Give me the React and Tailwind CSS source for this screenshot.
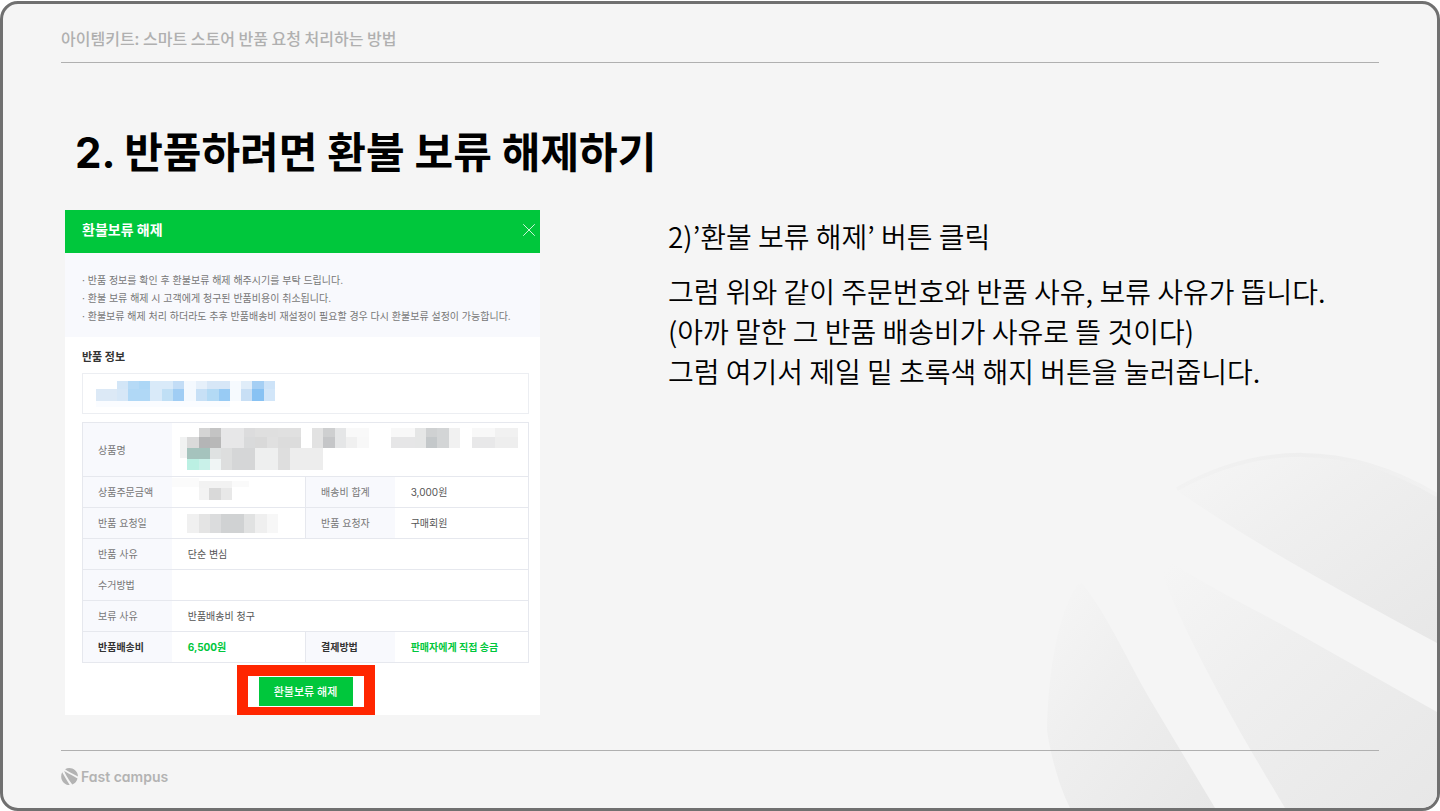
import React from 'react';
import { X } from 'lucide-react';

const notices = [
  '반품 정보를 확인 후 환불보류 해제 해주시기를 부탁 드립니다.',
  '환불 보류 해제 시 고객에게 청구된 반품비용이 취소됩니다.',
  '환불보류 해제 처리 하더라도 추후 반품배송비 재설정이 필요할 경우 다시 환불보류 설정이 가능합니다.',
];

// [x, y, width, height, color]
const orderBlocks = [
  [173, 123, 32, 25, '#d3e6f7'], [205, 123, 34, 25, '#b6daf6'], [239, 123, 34, 25, '#add7f6'],
  [273, 123, 68, 25, '#d9eaf9'], [341, 123, 34, 25, '#c3ddf6'], [375, 123, 34, 25, '#f4f9fe'],
  [409, 123, 35, 25, '#e6f0fa'], [444, 123, 67, 25, '#d7e7f7'], [511, 123, 34, 60, '#f6fafe'],
  [545, 123, 34, 25, '#e0edf9'], [579, 123, 34, 25, '#a5cff4'], [613, 123, 35, 25, '#cde3f8'],
  [110, 148, 63, 35, '#dce9f6'], [173, 148, 32, 35, '#d6e7f7'], [205, 148, 68, 35, '#b0d8f6'],
  [273, 148, 34, 35, '#d9eaf9'], [307, 148, 34, 35, '#c0dff5'], [341, 148, 34, 35, '#a0cdf4'],
  [375, 148, 34, 35, '#f4f9fe'], [409, 148, 35, 35, '#c7e0f6'], [444, 148, 34, 35, '#b3daf5'],
  [478, 148, 33, 35, '#98cbf4'], [545, 148, 34, 35, '#c8dff5'], [579, 148, 34, 35, '#88c2f3'],
  [613, 148, 35, 35, '#d2e6f9'], [110, 183, 401, 17, '#fafcff'],
];

const productBlocks = [
  [416, 262, 34, 26, '#d4d4d4'], [450, 262, 33, 26, '#c4c4c4'], [483, 262, 69, 58, '#e7e7e8'],
  [552, 262, 34, 26, '#dcdcdd'], [586, 262, 68, 26, '#dfdfdf'], [654, 262, 69, 26, '#e0e0e0'],
  [552, 288, 34, 32, '#d9dadb'], [586, 288, 34, 32, '#d9d9d9'], [620, 288, 34, 32, '#e0e0e0'],
  [654, 288, 69, 32, '#dcdcdc'], [360, 288, 22, 62, '#f1f2f2'], [382, 288, 34, 32, '#dadada'],
  [416, 288, 34, 32, '#b4b5b6'], [450, 288, 33, 32, '#b8b8b8'], [382, 320, 68, 34, '#a5c3bd'],
  [450, 320, 33, 34, '#dfe2e2'], [483, 320, 34, 67, '#dddede'], [517, 320, 68, 67, '#d5d6d7'],
  [382, 354, 34, 33, '#bbf0e3'], [416, 354, 34, 33, '#c9f1e9'], [450, 354, 33, 33, '#f0f5f5'],
  [585, 320, 69, 67, '#eeefef'], [654, 320, 36, 67, '#dedede'], [690, 320, 99, 67, '#ededed'],
  [757, 262, 33, 58, '#e2e2e2'], [790, 262, 34, 26, '#cecfd0'], [790, 288, 34, 32, '#c5c6c8'],
  [824, 262, 34, 58, '#e5e6e7'], [858, 262, 68, 26, '#f9f9f9'], [858, 288, 34, 32, '#f0f0f0'],
  [892, 288, 34, 32, '#f8f8f8'], [994, 262, 70, 26, '#f8f8f8'], [994, 288, 70, 32, '#e6e6e7'],
  [1064, 262, 34, 58, '#e5e6e6'], [1098, 262, 34, 26, '#cfd1d2'], [1098, 288, 34, 32, '#c4c8ca'],
  [1132, 262, 35, 58, '#d3d5d6'], [1167, 262, 34, 58, '#f1f1f1'], [1235, 262, 69, 26, '#f8f8f8'],
  [1304, 262, 70, 26, '#f1f1f1'], [1235, 288, 69, 32, '#e8e8e9'], [1304, 288, 70, 32, '#eeeeee'],
];

const amountBlocks = [
  [336, 18, 80, 28, '#fbfbfb'], [516, 26, 50, 20, '#fafafa'],
  [416, 26, 100, 22, '#f2f2f2'], [416, 48, 32, 35, '#f3f3f3'], [448, 48, 34, 35, '#d9d9d9'],
  [482, 48, 34, 35, '#e8e8e8'],
];

const dateBlocks = [
  [382, 128, 34, 58, '#f0f0f0'], [416, 128, 34, 58, '#e4e4e4'], [450, 128, 34, 58, '#dbdcdd'],
  [484, 128, 68, 58, '#d0d2d3'], [552, 128, 34, 58, '#e1e2e2'], [586, 128, 34, 58, '#efefef'],
  [620, 128, 35, 58, '#f7f7f7'],
];

const Mosaic = ({ blocks, viewBox, className }) => (
  <svg viewBox={viewBox} className={className} shapeRendering="crispEdges" aria-hidden="true">
    {blocks.map(([x, y, w, h, fill]) => (
      <rect key={`${x}-${y}`} x={x} y={y} width={w} height={h} fill={fill} />
    ))}
  </svg>
);

const Label = ({ children, strong }) => (
  <th
    scope="row"
    className={`bg-[#f8f9fd] pl-[15px] text-left ${strong ? 'font-bold text-[#333333]' : 'font-normal text-[#777777]'}`}
  >
    {children}
  </th>
);

const Backdrop = () => (
  <svg
    viewBox="0 0 417 368"
    className="pointer-events-none absolute right-0 bottom-0 h-[368px] w-[417px]"
    aria-hidden="true"
  >
    <defs>
      <linearGradient id="blade" x1="0" y1="0" x2="1" y2="1">
        <stop offset="0.05" stopColor="#f5f5f5" />
        <stop offset="0.4" stopColor="#efefef" />
        <stop offset="1" stopColor="#e7e7e7" />
      </linearGradient>
      <linearGradient id="rim" x1="0" y1="0" x2="1" y2="0">
        <stop offset="0" stopColor="#f2f2f2" />
        <stop offset="0.5" stopColor="#eeeeee" />
        <stop offset="1" stopColor="#f1f1f1" />
      </linearGradient>
    </defs>
    <path d="M156 50C235 4 325 -1 417 54V203C330 156 245 111 156 50Z" fill="url(#blade)" />
    <path d="M157 49C235 5 325 0 417 55" fill="none" stroke="url(#rim)" strokeWidth="4" />
    <path d="M136 112C185 147 240 171 300 206L417 272V368H265C235 318 150 175 136 112Z" fill="url(#blade)" />
    <path d="M62 143C88 176 105 216 128 256L195 368H50C36 340 29 305 27 290C28 240 36 175 58 144Z" fill="url(#blade)" />
  </svg>
);

const Logo = () => (
  <svg viewBox="0 0 34 34" className="size-[17px]" fill="#b3b3b3" aria-hidden="true">
    <path d="M8.2 2.4C18-3.4 33.4 2.6 34 17.2L26.2 12.8C20 9.6 13.5 6.6 8.2 2.4Z" />
    <path d="M6.4 6.2C12 10 19.5 13 26.2 17L33 21.2C31.5 27 28 31 22.6 33L16 23.8C12 17.5 8 11.5 6.4 6.2Z" />
    <path d="M2.4 8.4C5 13 8 18.5 11.3 23.8L17.4 34C4 34-3.6 20 2.4 8.4Z" />
  </svg>
);

const RefundModal = () => (
  <section className="w-[475px] max-w-full bg-white font-['Inter','Noto_Sans_CJK_KR',sans-serif] text-[10px] leading-[18px] text-[#555555]">
    <header className="flex h-[43px] items-center justify-between bg-[#00c73c] pb-[3px] pl-[17px]">
      <h2 className="text-sm font-bold text-white">환불보류 해제</h2>
      <button type="button" aria-label="닫기" className="text-white/80">
        <X size={22} strokeWidth={1} absoluteStrokeWidth />
      </button>
    </header>

    <ul className="bg-[#f8f9fd] pt-[18px] pb-3 pl-[17px] whitespace-nowrap text-[#777777]">
      {notices.map((text) => (
        <li key={text}>· {text}</li>
      ))}
    </ul>

    <div className="pt-[11px] pr-[11px] pl-[17px]">
      <h3 className="text-[11px] font-bold text-[#333333]">반품 정보</h3>
      <div className="mt-[7px] h-[41px] border border-[#eceef2] px-[13px] pt-[7px]">
        <Mosaic blocks={orderBlocks} viewBox="110 123 540 78" className="h-[26px] w-[180px]" />
      </div>

      <table className="mt-2 w-full table-fixed border-collapse border border-[#e6e8ee]">
        <colgroup>
          <col className="w-1/5" />
          <col className="w-3/10" />
          <col className="w-1/5" />
          <col className="w-3/10" />
        </colgroup>
        <tbody className="divide-y divide-[#e6e8ee]">
          <tr className="h-[54px]">
            <Label>상품명</Label>
            <td colSpan="3">
              <Mosaic blocks={productBlocks} viewBox="336 255 1050 141" className="h-[47px] w-[350px]" />
            </td>
          </tr>
          <tr className="h-[31px]">
            <Label>상품주문금액</Label>
            <td className="border-r border-[#e6e8ee]">
              <Mosaic blocks={amountBlocks} viewBox="336 18 390 84" className="h-[28px] w-[130px]" />
            </td>
            <Label>배송비 합계</Label>
            <td className="pl-4">3,000원</td>
          </tr>
          <tr className="h-[31px]">
            <Label>반품 요청일</Label>
            <td className="border-r border-[#e6e8ee]">
              <Mosaic blocks={dateBlocks} viewBox="336 114 390 84" className="h-[28px] w-[130px]" />
            </td>
            <Label>반품 요청자</Label>
            <td className="pl-4">구매회원</td>
          </tr>
          <tr className="h-[31px]">
            <Label>반품 사유</Label>
            <td colSpan="3" className="pl-4">단순 변심</td>
          </tr>
          <tr className="h-[31px]">
            <Label>수거방법</Label>
            <td colSpan="3" />
          </tr>
          <tr className="h-[31px]">
            <Label>보류 사유</Label>
            <td colSpan="3" className="pl-4">반품배송비 청구</td>
          </tr>
          <tr className="h-[31px] font-bold text-[#00c73c]">
            <Label strong>반품배송비</Label>
            <td className="border-r border-[#e6e8ee] pl-4">6,500원</td>
            <Label strong>결제방법</Label>
            <td className="pl-4">판매자에게 직접 송금</td>
          </tr>
        </tbody>
      </table>

      <div className="mt-0.5 flex justify-center">
        <div className="border-[11px] border-b-8 border-[#ff2600] px-[11px] py-px">
          <button type="button" className="block h-[29px] w-[94px] bg-[#00c73c] text-[11px] font-medium text-white">
            환불보류 해제
          </button>
        </div>
      </div>
    </div>
  </section>
);

const App = () => {
  return (
    <div className="min-h-screen bg-white pt-px font-['Noto_Sans_CJK_KR',sans-serif]">
      <div className="relative flex min-h-[calc(100vh-1px)] flex-col overflow-hidden rounded-[18px] border-[3px] border-[#707070] bg-[#f5f5f5] px-[58px]">
        <Backdrop />

        <header className="flex h-[59px] items-center border-b border-[#b0b0b0] pt-2.5 text-base font-medium text-[#b0b0b0]">
          아이템키트: 스마트 스토어 반품 요청 처리하는 방법
        </header>

        <main className="flex-1 pt-[62px] pb-8 text-black">
          <h1 className="pl-[14px] font-['Inter','Noto_Sans_CJK_KR',sans-serif] text-[42px] leading-[56px] font-bold">
            2. 반품하려면 환불 보류 해제하기
          </h1>
          <div className="mt-[29px] flex gap-32 pl-1">
            <div className="shrink-0">
              <RefundModal />
            </div>
            <div className="space-y-[15px] pt-1.5 text-[28px] leading-[40px] font-[350]">
              <p>2)’환불 보류 해제’ 버튼 클릭</p>
              <p>
                그럼 위와 같이 주문번호와 반품 사유, 보류 사유가 뜹니다.
                <br />
                (아까 말한 그 반품 배송비가 사유로 뜰 것이다)
                <br />
                그럼 여기서 제일 밑 초록색 해지 버튼을 눌러줍니다.
              </p>
            </div>
          </div>
        </main>

        <footer className="relative flex h-[58px] items-center gap-[3px] border-t border-[#b0b0b0] pb-1.5 text-[#b3b3b3]">
          <Logo />
          <span className="font-['Inter',sans-serif] text-sm font-semibold [font-feature-settings:'cv11']">
            Fast campus
          </span>
        </footer>
      </div>
    </div>
  );
};

export default App;
